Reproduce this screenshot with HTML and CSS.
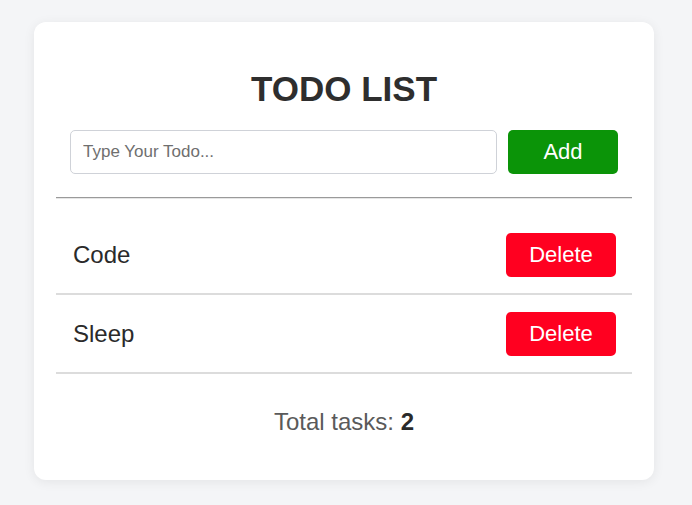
FILE: index.html
```html
<!DOCTYPE html>
<html>
<head>
<meta charset="utf-8">
<link rel="stylesheet" href="styles.css">
</head>
<body>
<div class="card">
  <h1 class="title">TODO LIST</h1>
  <form class="add-form" onsubmit="return false">
    <input class="todo-input" type="text" placeholder="Type Your Todo...">
    <button class="btn btn-add" type="submit">Add</button>
  </form>
  <hr class="divider">
  <ul class="todo-list">
    <li class="todo-item"><span class="todo-text">Code</span><button class="btn btn-delete">Delete</button></li>
    <li class="todo-item"><span class="todo-text">Sleep</span><button class="btn btn-delete">Delete</button></li>
  </ul>
  <p class="total">Total tasks: <strong>2</strong></p>
</div>
</body>
</html>
```
FILE: styles.css
```css
* { box-sizing: border-box; }
html, body { margin: 0; padding: 0; }
body {
  background: #f4f5f7;
  font-family: "Liberation Sans", Arial, sans-serif;
  color: #333;
  padding: 22px 38px 24px 34px;
}
.card {
  width: 620px;
  background: #fff;
  border-radius: 12px;
  box-shadow: 0 2px 12px rgba(0,0,0,0.07);
  padding: 22px 22px 44px;
}
.title {
  margin: 25px 0 21px;
  text-align: center;
  font-size: 35px;
  font-weight: bold;
  color: #2e2e2e;
  line-height: 40px;
}
.add-form {
  display: flex;
  gap: 11px;
  margin: 0 14px;
}
.todo-input {
  flex: 1;
  height: 44px;
  border: 1px solid #cfd2d8;
  border-radius: 5px;
  padding: 0 12px;
  font-family: inherit;
  font-size: 17px;
  color: #333;
  outline: none;
}
.todo-input::placeholder { color: #6f6f6f; }
.btn {
  width: 110px;
  height: 44px;
  border: none;
  border-radius: 5px;
  color: #fff;
  font-family: inherit;
  font-size: 22px;
  cursor: pointer;
}
.btn-add { background: #0b9408; }
.btn-delete { background: #ff0020; }
.divider {
  margin: 23px 0 0;
  border: none;
  border-top: 1px solid #9a9a9a;
  border-bottom: 1px solid #e6e6e6;
}
.todo-list {
  list-style: none;
  margin: 18px 0 0;
  padding: 0;
}
.todo-item {
  display: flex;
  align-items: center;
  justify-content: space-between;
  padding: 16px 16px 16px 17px;
  border-bottom: 2px solid #dcdcdc;
}
.todo-item + .todo-item { padding-top: 17px; }
.todo-text {
  font-size: 24px;
  color: #2a2a2a;
}
.total {
  margin: 34px 0 0;
  text-align: center;
  font-size: 24px;
  color: #5a5a5a;
}
.total strong { color: #2a2a2a; }
```
